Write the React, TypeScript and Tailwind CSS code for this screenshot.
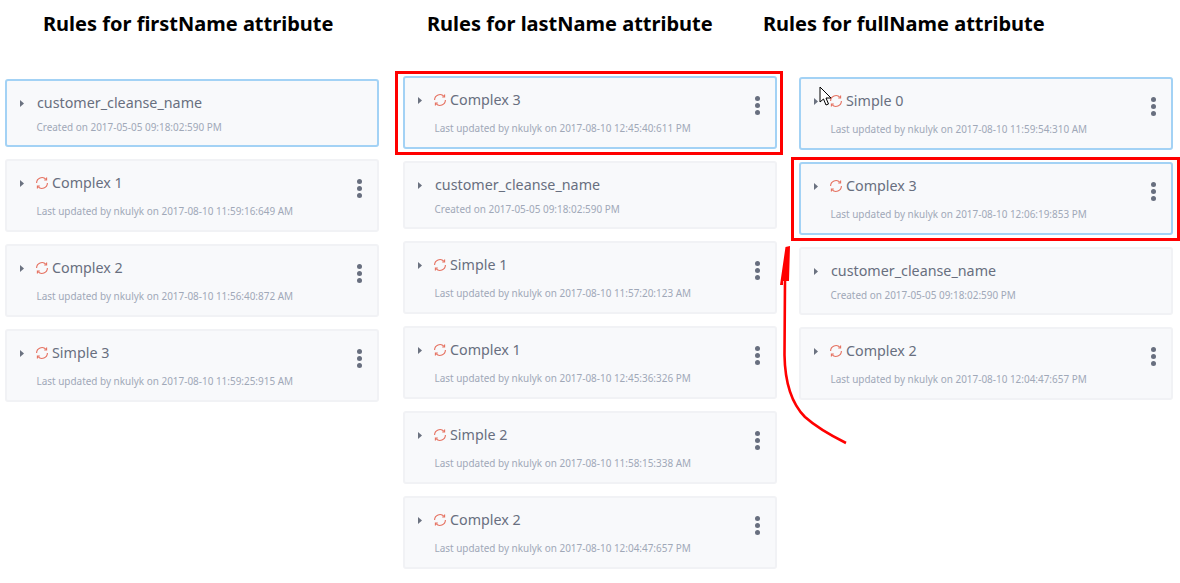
import React from "react";

/* ================= TYPE ================= */
type Rule = {
  name: string;
  meta: string;
  complex?: boolean;
  active?: boolean;
  h: string;
};

/* ================= DATA ================= */
const first: Rule[] = [
  { name: "customer_cleanse_name", meta: "Created on 2017-05-05 09:18:02:590 PM", active: true, h: "h-[68px]" },
  { name: "Complex 1", meta: "Last updated by nkulyk on 2017-08-10 11:59:16:649 AM", complex: true, h: "h-[73px]" },
  { name: "Complex 2", meta: "Last updated by nkulyk on 2017-08-10 11:56:40:872 AM", complex: true, h: "h-[73px]" },
  { name: "Simple 3", meta: "Last updated by nkulyk on 2017-08-10 11:59:25:915 AM", complex: true, h: "h-[73px]" },
];

const last: Rule[] = [
  { name: "Complex 3", meta: "Last updated by nkulyk on 2017-08-10 12:45:40:611 PM", complex: true, active: true, h: "h-[73px]" },
  { name: "customer_cleanse_name", meta: "Created on 2017-05-05 09:18:02:590 PM", h: "h-[68px]" },
  { name: "Simple 1", meta: "Last updated by nkulyk on 2017-08-10 11:57:20:123 AM", complex: true, h: "h-[73px]" },
  { name: "Complex 1", meta: "Last updated by nkulyk on 2017-08-10 12:45:36:326 PM", complex: true, h: "h-[73px]" },
  { name: "Simple 2", meta: "Last updated by nkulyk on 2017-08-10 11:58:15:338 AM", complex: true, h: "h-[73px]" },
  { name: "Complex 2", meta: "Last updated by nkulyk on 2017-08-10 12:04:47:657 PM", complex: true, h: "h-[73px]" },
];

const full: Rule[] = [
  { name: "Simple 0", meta: "Last updated by nkulyk on 2017-08-10 11:59:54:310 AM", complex: true, active: true, h: "h-[73px]" },
  { name: "Complex 3", meta: "Last updated by nkulyk on 2017-08-10 12:06:19:853 PM", complex: true, active: true, h: "h-[73px]" },
  { name: "customer_cleanse_name", meta: "Created on 2017-05-05 09:18:02:590 PM", h: "h-[68px]" },
  { name: "Complex 2", meta: "Last updated by nkulyk on 2017-08-10 12:04:47:657 PM", complex: true, h: "h-[73px]" },
];

/* ================= ICONS ================= */
function SyncIcon() {
  return (
    <svg width="14" height="14" viewBox="0 0 14 14" fill="none" stroke="#e5705f" strokeWidth="1.1" className="-ml-[2px] mr-px shrink-0">
      <path d="M1.6 7A5.4 5.4 0 0 1 11 3.3" />
      <path d="M12.4 7A5.4 5.4 0 0 1 3 10.7" />
      <path d="M11.6 1.5V4H9.2" />
      <path d="M2.4 12.5V10H4.8" />
    </svg>
  );
}

function Caret() {
  return (
    <svg width="4" height="7" viewBox="0 0 4 7" className="shrink-0">
      <path d="M0 0L4 3.5L0 7Z" fill="#6b7280" />
    </svg>
  );
}

/* ================= CARD ================= */
function Card({ rule }: { rule: Rule }) {
  return (
    <div
      className={`${rule.h} relative rounded-[3px] border-2 bg-[#f8f9fb] pl-[13px] ${
        rule.active ? "border-[#a3d2f5]" : "border-[#f1f2f5]"
      }`}
    >
      <div className="mt-[11px] flex h-[22px] items-center">
        <Caret />
        <div className="ml-[13px] flex items-center gap-[2px]">
          {rule.complex && <SyncIcon />}
          <span className="text-[14.3px] text-[#686f7f]">{rule.name}</span>
        </div>
      </div>
      <p className={`ml-[16.5px] text-[9.95px] leading-[14px] text-[#a0a8b8] ${rule.complex ? "mt-[10px]" : "mt-[6px]"}`}>
        {rule.meta}
      </p>
      {rule.complex && (
        <div className="absolute right-[15px] top-[18px] flex flex-col gap-[2px]">
          <span className="size-[5px] rounded-full bg-[#686f7f]" />
          <span className="size-[5px] rounded-full bg-[#686f7f]" />
          <span className="size-[5px] rounded-full bg-[#686f7f]" />
        </div>
      )}
    </div>
  );
}

function Column({ title, rules, className, titleClass }: { title: string; rules: Rule[]; className: string; titleClass: string }) {
  return (
    <section className={`w-[374px] shrink-0 ${className}`}>
      <h2 className={`absolute top-[9px] whitespace-nowrap text-[20px] font-bold leading-[30px] text-black ${titleClass}`}>{title}</h2>
      <div className="flex flex-col gap-[12px]">
        {rules.map((r, i) => (
          <Card key={i} rule={r} />
        ))}
      </div>
    </section>
  );
}

/* ================= PAGE ================= */
export default function App() {
  return (
    <div className="relative flex h-[583px] w-[1180px] items-start overflow-hidden bg-white font-['Noto_Sans',sans-serif]">
      <Column title="Rules for firstName attribute" rules={first} className="ml-[5px] mt-[79px]" titleClass="left-[43px]" />
      <Column title="Rules for lastName attribute" rules={last} className="ml-[24px] mt-[76px]" titleClass="left-[427px]" />
      <Column title="Rules for fullName attribute" rules={full} className="ml-[22px] mt-[77px]" titleClass="left-[763px]" />

      {/* ANNOTATIONS */}
      <div className="absolute left-[395px] top-[71px] h-[84px] w-[388px] border-[3px] border-[#ff0000]" />
      <div className="absolute left-[791px] top-[157px] h-[84px] w-[389px] border-[3px] border-[#ff0000]" />
      <svg className="absolute left-[770px] top-[240px]" width="90" height="210" viewBox="770 240 90 210" fill="none">
        <path d="M785 280L784.5 355C785 385 793 405 805 417C815 426 830 435 846 443" stroke="#ff0000" strokeWidth="2.6" />
        <path d="M785.5 247L790 246L789 281L783 281V285L780 285Z" fill="#ff0000" />
      </svg>
      <svg className="absolute left-[819px] top-[86px]" width="14" height="21" viewBox="0 0 14 21">
        <path d="M1 1V16L4.5 13L7 19L9.5 18L7 12H12Z" fill="#ffffff" stroke="#000000" strokeWidth="1" />
      </svg>
    </div>
  );
}
